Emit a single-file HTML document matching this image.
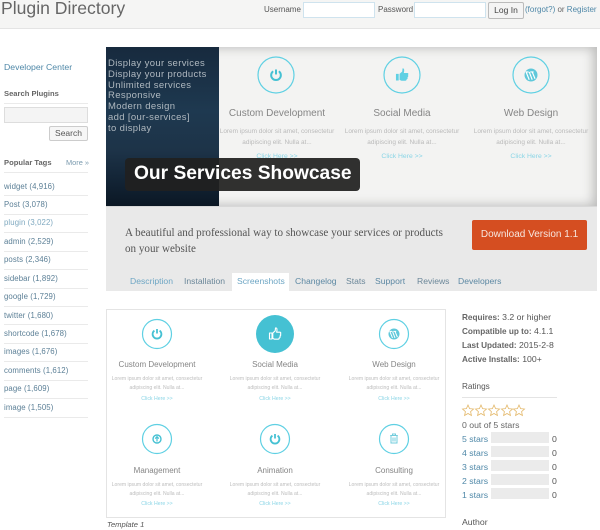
<!DOCTYPE html>
<html><head><meta charset="utf-8"><style>
html,body{margin:0;padding:0;background:#fff}
#p{position:relative;width:600px;height:530px;overflow:hidden;font-family:"Liberation Sans",sans-serif;font-size:9px;color:#555;filter:blur(.3px)}
#p div,#p a{position:absolute;white-space:nowrap}
.t{line-height:12px;height:12px}
.c{transform:translateX(-50%);text-align:center}
.b{color:#4f88a8}
.l{left:4px;width:84px;height:1px;background:#eaeaea}
.g{left:4px;color:#5b7f96;letter-spacing:.1px;font-size:7.8px}
.h{color:#858585;font-size:10px;letter-spacing:0}
.s{color:#bdbdbd;font-size:5.1px;line-height:8.5px;height:9px}
.z{font-size:6.45px;line-height:10.8px;color:#bababa}
.k{color:#8ad5e6;font-size:5.2px;line-height:10px;height:10px}
.y{font-size:8px;line-height:11px;color:#858585}
.m{font-weight:bold;color:#666;font-size:8.2px}
.v{font-size:8.7px}
.q{font-size:8.6px;top:275px}
.bar{left:491px;width:58px;height:11px;background:#ebebeb}
svg{position:absolute;left:0;top:0}
</style></head><body><div id="p">
<div style="left:0;top:0;width:600px;height:28px;background:#f5f5f4;border-bottom:1px solid #e4e4e4"></div>
<div style="left:1px;top:-4px;font-size:17.6px;line-height:24px;color:#666">Plugin Directory</div>
<div class="t" style="left:264px;top:4px;color:#555;font-size:8px">Username</div>
<div style="left:303px;top:2px;width:70px;height:14px;background:#fff;border:1px solid #cfe3ee"></div>
<div class="t" style="left:378px;top:4px;color:#555;font-size:8px">Password</div>
<div style="left:414px;top:2px;width:70px;height:14px;background:#fff;border:1px solid #cfe3ee"></div>
<div style="left:488px;top:2px;width:34px;height:15px;background:#f4f4f4;border:1px solid #bbb;border-radius:2px;text-align:center;font-size:8.5px;line-height:15px;color:#444">Log In</div>
<div class="t" style="left:525px;top:4px;font-size:8px;color:#666"><span class="b">(forgot?)</span> or <span class="b">Register</span></div>

<div class="t b" style="left:4px;top:61px;font-size:8.7px">Developer Center</div>
<div class="t m" style="left:4px;top:88px;font-size:7.6px">Search Plugins</div>
<div class="l" style="top:103px"></div>
<div style="left:4px;top:107px;width:82px;height:14px;background:#f4f4f4;border:1px solid #ddd"></div>
<div style="left:49px;top:126px;width:37px;height:13px;background:#f6f6f6;border:1px solid #ccc;border-radius:2px;text-align:center;font-size:8.5px;line-height:13px;color:#555">Search</div>
<div class="t m" style="left:4px;top:157px;font-size:7.6px">Popular Tags</div>
<div class="t" style="left:66px;top:157px;font-size:7.4px;color:#7a9aae">More »</div>
<div class="l" style="top:172px"></div>
<div class="t g" style="top:181px">widget (4,916)</div><div class="l" style="top:195px"></div>
<div class="t g" style="top:199px">Post (3,078)</div><div class="l" style="top:214px"></div>
<div class="t g" style="top:217px;color:#7fa9c0">plugin (3,022)</div><div class="l" style="top:232px"></div>
<div class="t g" style="top:236px">admin (2,529)</div><div class="l" style="top:251px"></div>
<div class="t g" style="top:254px">posts (2,346)</div><div class="l" style="top:269px"></div>
<div class="t g" style="top:273px">sidebar (1,892)</div><div class="l" style="top:288px"></div>
<div class="t g" style="top:291px">google (1,729)</div><div class="l" style="top:306px"></div>
<div class="t g" style="top:310px">twitter (1,680)</div><div class="l" style="top:324px"></div>
<div class="t g" style="top:328px">shortcode (1,678)</div><div class="l" style="top:343px"></div>
<div class="t g" style="top:346px">images (1,676)</div><div class="l" style="top:361px"></div>
<div class="t g" style="top:365px">comments (1,612)</div><div class="l" style="top:380px"></div>
<div class="t g" style="top:383px">page (1,609)</div><div class="l" style="top:398px"></div>
<div class="t g" style="top:402px">image (1,505)</div><div class="l" style="top:417px"></div>

<!-- hero -->
<div style="left:106px;top:47px;width:491px;height:159px;background:#f3f3f2;box-shadow:inset -6px 0 10px rgba(0,0,0,.12),inset 0 4px 10px rgba(0,0,0,.07),inset 0 -4px 10px rgba(0,0,0,.07)"></div>
<div style="left:106px;top:47px;width:113px;height:159px;background:linear-gradient(180deg,#172a3e,#1e3950 40%,#1d3348 65%,#122334 85%,#0b1724)"></div>
<div style="left:108px;top:59px;font-size:9.5px;line-height:10.8px;color:#b0b9c0;letter-spacing:.35px">Display your services<br>Display your products<br>Unlimited services<br>Responsive<br>Modern design<br>add [our-services]<br>to display</div>
<div class="h c" style="left:277px;top:108px;line-height:12px">Custom Development</div>
<div class="h c" style="left:402px;top:108px;line-height:12px">Social Media</div>
<div class="h c" style="left:531px;top:108px;line-height:12px">Web Design</div>
<div class="c z" style="left:277px;top:127px">Lorem ipsum dolor sit amet, consectetur<br>adipiscing elit. Nulla at...</div>
<div class="c z" style="left:402px;top:127px">Lorem ipsum dolor sit amet, consectetur<br>adipiscing elit. Nulla at...</div>
<div class="c z" style="left:531px;top:127px">Lorem ipsum dolor sit amet, consectetur<br>adipiscing elit. Nulla at...</div>
<div class="k c" style="left:277px;top:152px;font-size:6.8px">Click Here &gt;&gt;</div>
<div class="k c" style="left:402px;top:152px;font-size:6.8px">Click Here &gt;&gt;</div>
<div class="k c" style="left:531px;top:152px;font-size:6.8px">Click Here &gt;&gt;</div>

<!-- band -->
<div style="left:106px;top:206px;width:491px;height:85px;background:#e9e9e9;border-top:1px solid #d8d8d8;box-sizing:border-box"></div>
<div style="left:125px;top:226px;font-family:'Liberation Serif',serif;font-size:11.1px;line-height:15.5px;color:#555">A beautiful and professional way to showcase your services or products<br>on your website</div>
<div style="left:472px;top:220px;width:115px;height:30px;background:#d54e21;border-radius:2px;color:#f6e6df;font-size:10px;line-height:30px;text-align:center">Download Version 1.1</div>
<div style="left:232px;top:273px;width:57px;height:18px;background:#fff"></div>
<div class="t q" style="left:130px;color:#6ea6c4">Description</div>
<div class="t q" style="left:184px;color:#6b8799">Installation</div>
<div class="t q" style="left:237px;color:#6ea6c4">Screenshots</div>
<div class="t q" style="left:295px;color:#5c88a3">Changelog</div>
<div class="t q" style="left:346px;color:#6b8799">Stats</div>
<div class="t q" style="left:375px;color:#5c88a3">Support</div>
<div class="t q" style="left:417px;color:#6b8799">Reviews</div>
<div class="t q" style="left:458px;color:#5c88a3">Developers</div>

<!-- screenshot -->
<div style="left:106px;top:309px;width:338px;height:207px;border:1px solid #e4e4e4;background:#fff"></div>
<div class="h c y" style="left:157px;top:359px">Custom Development</div>
<div class="h c y" style="left:275px;top:359px">Social Media</div>
<div class="h c y" style="left:394px;top:359px">Web Design</div>
<div class="h c y" style="left:157px;top:465px">Management</div>
<div class="h c y" style="left:275px;top:465px">Animation</div>
<div class="h c y" style="left:394px;top:465px">Consulting</div>
<div class="s c" style="left:157px;top:375px">Lorem ipsum dolor sit amet, consectetur<br>adipiscing elit. Nulla at...</div>
<div class="s c" style="left:275px;top:375px">Lorem ipsum dolor sit amet, consectetur<br>adipiscing elit. Nulla at...</div>
<div class="s c" style="left:394px;top:375px">Lorem ipsum dolor sit amet, consectetur<br>adipiscing elit. Nulla at...</div>
<div class="s c" style="left:157px;top:481px">Lorem ipsum dolor sit amet, consectetur<br>adipiscing elit. Nulla at...</div>
<div class="s c" style="left:275px;top:481px">Lorem ipsum dolor sit amet, consectetur<br>adipiscing elit. Nulla at...</div>
<div class="s c" style="left:394px;top:481px">Lorem ipsum dolor sit amet, consectetur<br>adipiscing elit. Nulla at...</div>
<div class="k c" style="left:157px;top:393.5px">Click Here &gt;&gt;</div>
<div class="k c" style="left:275px;top:393.5px">Click Here &gt;&gt;</div>
<div class="k c" style="left:394px;top:393.5px">Click Here &gt;&gt;</div>
<div class="k c" style="left:157px;top:499px">Click Here &gt;&gt;</div>
<div class="k c" style="left:275px;top:499px">Click Here &gt;&gt;</div>
<div class="k c" style="left:394px;top:499px">Click Here &gt;&gt;</div>
<div class="t" style="left:107px;top:519px;font-size:7.6px;font-style:italic;color:#555">Template 1</div>

<svg width="600" height="530" fill="none">
<defs>
<g id="pw"><path d="M-2.6-3.4A4.4 4.4 0 1 0 2.6-3.4" stroke-width="1.8" stroke="#45c1d3"/><path d="M0-5V-.5" stroke-width="1.8" stroke="#45c1d3"/></g>
<path id="th" d="M-5.5-1H-3V5H-5.5ZM-2.2-1 .2-3.2 .5-6C2-6.5 2.4-4.5 1.6-1.8H5C6-1.6 6-.6 5.4 0 6 .8 5.8 1.6 5 2 5.4 3 5 3.8 4.2 4 4.2 4.8 3.6 5.2 3 5.2H-.5L-2.2 4.4Z"/>
<g id="wp"><circle r="5.5" fill="#5fc8da"/><path d="M-4-2.2-1.5 4M-1.5-2.6 1 4M1-2.6 3.4 3.2M-4.6-2.6H-2M-.6-2.6H2.2" stroke="#fff" stroke-width="1"/></g>
</defs>
<g stroke="#5fd0e3" stroke-width="1.2">
<circle cx="276" cy="75" r="18"/><circle cx="402" cy="75" r="18"/><circle cx="531" cy="75" r="18"/>
<circle cx="157" cy="334" r="14.5"/><circle cx="394" cy="334" r="14.5"/>
<circle cx="157" cy="439" r="14.5"/><circle cx="275" cy="439" r="14.5"/><circle cx="394" cy="439" r="14.5"/>
</g>
<use href="#pw" transform="translate(276 75) scale(1.1)"/>
<use href="#th" fill="#5fd0e3" transform="translate(402 75) scale(1.1)"/>
<use href="#wp" transform="translate(531 75) scale(1.18)"/>
<use href="#pw" transform="translate(157 334)"/>
<circle cx="275" cy="334" r="19" fill="#45c1d3"/>
<use href="#th" stroke="#fff" stroke-width="1.1" stroke-linejoin="round" fill="#45c1d3" transform="translate(275 334)"/>
<use href="#wp" transform="translate(394 334)"/>
<circle cx="157" cy="439" r="4" stroke="#45c1d3" stroke-width="1.4"/><path d="M157 441.5V437M155.2 438.6 157 436.6 158.8 438.6" stroke="#45c1d3" stroke-width="1.2"/>
<use href="#pw" transform="translate(275 439)"/>
<path d="M390.2 435.5H397.8M391 435.5V443H397V435.5M392.5 435.5V434H395.5V435.5M393 437.5V441.5M395 437.5V441.5" stroke="#72ccdc" stroke-width="1"/>
<g stroke="#e3b768" stroke-width=".8" id="st">
<path d="M468 405l1.6 3.6 3.9.4-2.9 2.6.8 3.9-3.4-2-3.4 2 .8-3.9-2.9-2.6 3.9-.4Z"/>
<path d="M481 405l1.6 3.6 3.9.4-2.9 2.6.8 3.9-3.4-2-3.4 2 .8-3.9-2.9-2.6 3.9-.4Z"/>
<path d="M494 405l1.6 3.6 3.9.4-2.9 2.6.8 3.9-3.4-2-3.4 2 .8-3.9-2.9-2.6 3.9-.4Z"/>
<path d="M507 405l1.6 3.6 3.9.4-2.9 2.6.8 3.9-3.4-2-3.4 2 .8-3.9-2.9-2.6 3.9-.4Z"/>
<path d="M519 405l1.6 3.6 3.9.4-2.9 2.6.8 3.9-3.4-2-3.4 2 .8-3.9-2.9-2.6 3.9-.4Z"/>
</g>
</svg>

<div style="left:125px;top:158px;width:235px;height:33px;background:rgba(32,32,32,.93);border-radius:4px"></div>
<div style="left:134px;top:162px;font-size:19.2px;font-weight:bold;line-height:24px;color:#fff">Our Services Showcase</div>

<!-- right -->
<div class="t v" style="left:462px;top:311px"><span class="m">Requires:</span> 3.2 or higher</div>
<div class="t v" style="left:462px;top:325px"><span class="m">Compatible up to:</span> 4.1.1</div>
<div class="t v" style="left:462px;top:339px"><span class="m">Last Updated:</span> 2015-2-8</div>
<div class="t v" style="left:462px;top:353px"><span class="m">Active Installs:</span> 100+</div>
<div class="t" style="left:462px;top:381px;font-size:8.2px;color:#555">Ratings</div>
<div style="left:462px;top:397px;width:95px;height:1px;background:#e4e4e4"></div>
<div class="t v" style="left:462px;top:419px;color:#666">0 out of 5 stars</div>
<div class="t b v" style="left:462px;top:433px">5 stars</div><div class="bar" style="top:432px"></div><div class="t v" style="left:552px;top:433px">0</div>
<div class="t b v" style="left:462px;top:447px">4 stars</div><div class="bar" style="top:446px"></div><div class="t v" style="left:552px;top:447px">0</div>
<div class="t b v" style="left:462px;top:461px">3 stars</div><div class="bar" style="top:460px"></div><div class="t v" style="left:552px;top:461px">0</div>
<div class="t b v" style="left:462px;top:475px">2 stars</div><div class="bar" style="top:474px"></div><div class="t v" style="left:552px;top:475px">0</div>
<div class="t b v" style="left:462px;top:489px">1 stars</div><div class="bar" style="top:488px"></div><div class="t v" style="left:552px;top:489px">0</div>
<div class="t v" style="left:462px;top:516px;color:#555">Author</div>
</div></body></html>
